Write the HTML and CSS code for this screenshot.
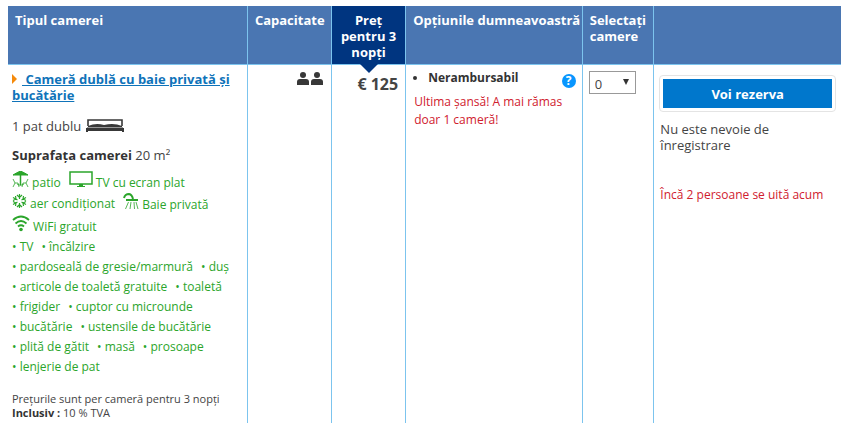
FILE: index.html
```html
<!DOCTYPE html>
<html lang="ro">
<head>
    <meta charset="UTF-8">
    <meta name="viewport" content="width=device-width, initial-scale=1.0">
    <title>Camere disponibile</title>
    <link rel="stylesheet" href="styles.css">
</head>
<body>

<table class="rooms">
    <thead>
        <tr>
            <th class="col-type">Tipul camerei</th>
            <th class="col-capacity">Capacitate</th>
            <th class="col-price">Preţ pentru 3 nopţi</th>
            <th class="col-options">Opţiunile dumneavoastră</th>
            <th class="col-select"><label for="rooms">Selectaţi camere</label></th>
            <td class="col-book"></td>
        </tr>
    </thead>
    <tbody>
        <tr>
            <td class="room">
                <a href="#" class="room-name"><svg class="arrow" width="5" height="10" viewBox="0 0 5 10"><path d="M0 0L5 5L0 10Z"/></svg><span>&nbsp;Cameră dublă cu baie privată şi bucătărie</span></a>

                <p class="beds">1 pat dublu
                    <svg width="40" height="14" viewBox="0 0 40 14"><path d="M3 7V1H37V7" fill="none" stroke="#383838" stroke-width="1.600"/><path d="M3 7Q11 3.500 19 6Q29 3.500 37 7V8H3Z" fill="#383838"/><path d="M2 8.500H38" stroke="#999"/><path d="M1 9H39V13H37V12H3V13H1Z" fill="#383838"/></svg>
                </p>
                <p class="size"><b>Suprafaţa camerei</b> 20 m²</p>

                <!-- Facilități cu iconiță -->
                <ul class="facilities">
                    <li>
                        <svg width="17" height="17" viewBox="0 0 17 17"><path d="M1 4Q4 2 8.500 0Q13 2 16 4Z" fill="#2ba52b"/><path d="M8.500 4V14" stroke-width="1.500"/><path d="M5 13Q8.500 16 12 13M1 8L3 12H6L7 16M3 12L1 16M16 8L14 12H11L10 16M14 12L16 16" stroke-width="0.800"/></svg>
                        patio
                    </li>
                    <li>
                        <svg width="24" height="17" viewBox="0 0 24 17"><path d="M1 1H23V13H1Z" stroke-width="1.500"/><path d="M10 13H14V15H16V16H8V15H10Z" fill="#2ba52b" stroke="none"/></svg>
                        TV cu ecran plat
                    </li>
                    <li>
                        <svg width="15" height="16" viewBox="0 0 15 16"><path d="M7.500 1V6M7.500 10V15M1 4.500L5.500 7M9.500 9L14 11.500M1 11.500L5.500 9M9.500 7L14 4.500M5 2L7.500 4.500L10 2M5 14L7.500 11.500L10 14M1 7.500L4 6L3.500 3M14 7.500L11 6L11.500 3M1 8.500L4 10L3.500 13M14 8.500L11 10L11.500 13" stroke-width="1.200"/></svg>
                        aer condiţionat
                    </li>
                    <li>
                        <svg width="16" height="17" viewBox="0 0 16 17"><path d="M1 5Q2 1 6 1Q9 1.500 10 6" stroke-width="2"/><path d="M3 7H15" stroke-width="2"/><path d="M5.500 9L2.500 16M8 9L7 16M11 9L11.500 16M13 9L15 16" stroke-width="0.800"/></svg>
                        Baie privată
                    </li>
                    <li>
                        <svg width="18" height="17" viewBox="0 0 18 17"><path d="M1 5Q9-2 17 5M3.500 8.500Q9 3.500 14.500 8.500M6 11.500Q9 9 12 11.500" stroke-width="1.800"/><circle cx="9" cy="14.500" r="1.800" fill="#2ba52b" stroke="none"/></svg>
                        WiFi gratuit
                    </li>
                </ul>

                <ul class="facilities facilities-text">
                    <li>• TV</li>
                    <li>• încălzire</li>
                    <li>• pardoseală de gresie/marmură</li>
                    <li>• duş</li>
                    <li>• articole de toaletă gratuite</li>
                    <li>• toaletă</li>
                    <li>• frigider</li>
                    <li>• cuptor cu microunde</li>
                    <li>• bucătărie</li>
                    <li>• ustensile de bucătărie</li>
                    <li>• plită de gătit</li>
                    <li>• masă</li>
                    <li>• prosoape</li>
                    <li>• lenjerie de pat</li>
                </ul>

                <p class="note">Preţurile sunt per cameră pentru 3 nopţi</p>
                <p class="note"><b>Inclusiv :</b> 10 % TVA</p>
            </td>
            <td class="capacity">
                <svg width="26" height="14" viewBox="0 0 26 14" fill="#383838"><circle cx="6" cy="3" r="3"/><path d="M0 13V10Q0 7 3 7H9Q12 7 12 10V13Z"/><circle cx="20" cy="3" r="3"/><path d="M14 13V10Q14 7 17 7H23Q26 7 26 10V13Z"/></svg>
            </td>
            <td class="price">€ 125</td>
            <td class="options">
                <div class="policy">
                    <ul>
                        <li>Nerambursabil</li>
                    </ul>
                    <a href="#" class="help">?</a>
                </div>
                <p class="urgent">Ultima şansă! A mai rămas doar 1 cameră!</p>
            </td>
            <td class="quantity">
                <div class="select-box">
                    <select id="rooms">
                        <option>0</option>
                        <option>1</option>
                    </select>
                </div>
            </td>
            <td class="book">
                <button type="button">Voi rezerva</button>
                <p>Nu este nevoie de înregistrare</p>
                <p class="watching">Încă 2 persoane se uită acum</p>
            </td>
        </tr>
    </tbody>
</table>

</body>
</html>
```

FILE: styles.css
```css
body {
    margin: 0;
    padding: 6px 9px 0 8px;
    font-family: "Open Sans", "Noto Sans", sans-serif;
    font-size: 13px;
    line-height: 16px;
    color: #444;
    background-color: #fff;
}
p, ul {
    margin: 0;
    padding: 0;
}
ul {
    list-style: none;
}
.rooms {
    width: 100%;
    table-layout: fixed;
    border-collapse: separate;
    border-spacing: 0;
}
.rooms th,
.rooms td {
    vertical-align: top;
    text-align: left;
    border-right: 1px solid #7cc4ee;
    box-sizing: border-box;
}
.rooms th:last-child,
.rooms td:last-child {
    border-right: none;
}
.rooms thead th,
.rooms thead td {
    height: 59px;
    padding: 6px 0 4px 7px;
    background-color: #4a76b2;
    border-bottom: 1px solid #7cc4ee;
    color: #fff;
    font-weight: bold;
}
.col-type {
    width: 28.8%;
}
.col-capacity {
    width: 10.1%;
}
.col-price {
    width: 8.9%;
}
.col-options {
    width: 21.2%;
}
.col-select {
    width: 8.6%;
}
.rooms thead .col-price {
    position: relative;
    padding: 6px 8px 4px;
    background-color: #003580;
    text-align: center;
}
/* săgeata de sub preț */
.col-price:after {
    content: '';
    position: absolute;
    top: 100%;
    left: 50%;
    margin-left: -9px;
    border: 9px solid transparent;
    border-top-color: #003580;
    border-bottom: none;
}

/* Tipul camerei */
.rooms .room {
    padding: 6px 4px 3px;
}
.room-name {
    display: block;
    color: #0f73b9;
    font-weight: bold;
    text-decoration: none;
}
.room-name span {
    text-decoration: underline;
}
.arrow {
    margin-right: 5px;
    fill: #f58a0b;
}
.beds {
    margin-top: 15px;
}
.beds svg {
    vertical-align: -2px;
}
.size {
    margin: 13px 0 8px;
}
.size b,
.note b {
    color: #333;
}
.facilities {
    display: flex;
    flex-wrap: wrap;
    column-gap: 8px;
    color: #2ba52b;
    font-size: 12px;
    line-height: 21px;
}
.facilities svg {
    fill: none;
    stroke: #2ba52b;
    vertical-align: -1px;
}
.facilities-text {
    line-height: 20px;
    margin-bottom: 15px;
}
.note {
    font-size: 11px;
    line-height: 14px;
}

.rooms .capacity {
    padding: 7px 8px;
    text-align: right;
}
.rooms .price {
    padding: 9px 7px;
    text-align: right;
    font-size: 16px;
    line-height: 20px;
    font-weight: bold;
}

/* Opțiuni */
.rooms .options {
    padding: 5px 6px 0 8px;
}
.policy {
    display: flex;
    justify-content: space-between;
    font-size: 12px;
    font-weight: bold;
    color: #333;
}
.policy ul {
    list-style: disc;
    padding-left: 14px;
}
.help {
    width: 14px;
    height: 14px;
    margin-top: 4px;
    border-radius: 50%;
    background-color: #0896ff;
    color: #fff;
    line-height: 14px;
    text-align: center;
    text-decoration: none;
}
.urgent {
    margin-top: 5px;
    font-size: 12px;
    line-height: 18px;
    color: #d0202e;
}

.rooms .quantity {
    padding: 6px;
}
.select-box {
    position: relative;
    width: 47px;
}
.select-box:after {
    content: '';
    position: absolute;
    top: 8px;
    right: 7px;
    border: 3px solid transparent;
    border-top: 6px solid #333;
    border-bottom: none;
    pointer-events: none;
}
select {
    display: block;
    width: 100%;
    height: 23px;
    padding: 2px 5px 0;
    border: 1px solid #999;
    border-radius: 0;
    background-color: #fff;
    color: #444;
    font-family: inherit;
    font-size: 13px;
    appearance: none;
}

/* Rezervare */
.rooms .book {
    padding: 11px 6px 0;
}
button {
    display: block;
    width: 100%;
    height: 35px;
    margin-bottom: 10px;
    border: 3px solid #fff;
    border-radius: 3px;
    outline: 1px solid #e4e4e4;
    background-color: #0077cc;
    color: #fff;
    font-family: inherit;
    font-size: 13px;
    font-weight: bold;
    cursor: pointer;
}
.book p {
    max-width: 130px;
}
.book .watching {
    max-width: none;
    margin-top: 34px;
    font-size: 12px;
    color: #d0202e;
}
```
